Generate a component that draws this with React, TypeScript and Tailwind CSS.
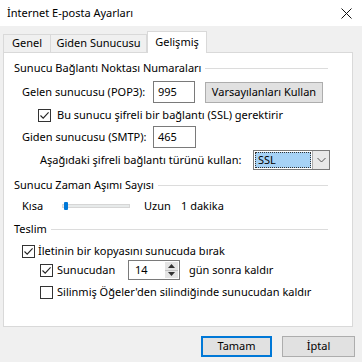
import React from "react"

const font = { fontFamily: '"Noto Sans", "Open Sans", sans-serif' }

function CheckBox({ checked }: { checked?: boolean }) {
  return (
    <span className="flex h-[13px] w-[13px] shrink-0 items-center justify-center border border-[#333333] bg-white">
      {checked && (
        <svg width="11" height="11" viewBox="0 0 11 11">
          <path d="M1.5 5.5 L4.2 8.2 L9.6 2.4" fill="none" stroke="#222" strokeWidth="1.1" />
        </svg>
      )}
    </span>
  )
}

function GroupHeader({ label }: { label: string }) {
  return (
    <div className="mt-[7px] flex h-[16px] items-center pl-[10px] pr-[24px]">
      <span>{label}</span>
      <span className="ml-[4px] h-px flex-1 bg-[#dcdcdc]" />
    </div>
  )
}

export default function App() {
  return (
    <div style={font} className="relative h-[362px] w-[362px] overflow-hidden whitespace-nowrap bg-[#f0f0f0] text-[11px] text-black">
      <div className="flex h-[26px] items-center justify-between bg-white pl-[7px] pr-[10px]">
        <span className="text-[11px]">İnternet E-posta Ayarları</span>
        <svg width="11" height="11" viewBox="0 0 11 11">
          <path d="M0.5 0.5 L10.5 10.5 M10.5 0.5 L0.5 10.5" stroke="#111" strokeWidth="1" />
        </svg>
      </div>

      <div className="flex h-[26px] items-end pl-[3px]">
        <div className="flex h-[18px] w-[48px] items-center justify-center border border-b-0 border-[#d9d9d9] bg-[#f0f0f0]">
          Genel
        </div>
        <div className="flex h-[18px] w-[96px] items-center justify-center border border-b-0 border-l-0 border-[#d9d9d9] bg-[#f0f0f0]">
          Giden Sunucusu
        </div>
        <div className="relative z-10 -mb-px flex h-[22px] w-[60px] items-center justify-center border border-b-0 border-[#d9d9d9] bg-white">
          Gelişmiş
        </div>
      </div>

      <div className="ml-[3px] h-[275px] w-[350px] border border-[#d9d9d9] bg-white">
        <GroupHeader label="Sunucu Bağlantı Noktası Numaraları" />

        <div className="mt-[5px] flex h-[22px] items-center pl-[18px]">
          <span className="w-[131px]">Gelen sunucusu (POP3):</span>
          <div className="flex h-[22px] w-[42px] items-center border border-[#7a7a7a] pl-[4px]">995</div>
          <button className="ml-[10px] h-[21px] w-[118px] border border-[#adadad] bg-[#e1e1e1]">
            Varsayılanları Kullan
          </button>
        </div>

        <div className="mt-[4px] flex h-[16px] items-center gap-[6px] pl-[34px]">
          <CheckBox checked />
          <span>Bu sunucu şifreli bir bağlantı (SSL) gerektirir</span>
        </div>

        <div className="mt-[3px] flex h-[22px] items-center pl-[18px]">
          <span className="w-[131px]">Giden sunucusu (SMTP):</span>
          <div className="flex h-[22px] w-[43px] items-center border border-[#7a7a7a] pl-[4px]">465</div>
        </div>

        <div className="mt-[2px] flex h-[20px] items-center pl-[36px]">
          <span className="w-[213px]">Aşağıdaki şifreli bağlantı türünü kullan:</span>
          <div className="flex h-[20px] w-[77px] border border-[#7a7a7a] bg-white">
            <div className="m-[1px] flex flex-1 items-center border border-dotted border-[#333] bg-[#a6d2f6] pl-[2px]">
              SSL
            </div>
            <div className="flex w-[17px] items-center justify-center border-l border-[#acacac] bg-[#e8e8e8]">
              <svg width="9" height="6" viewBox="0 0 9 6">
                <path d="M0.5 1 L4.5 5 L8.5 1" fill="none" stroke="#555" strokeWidth="1" />
              </svg>
            </div>
          </div>
        </div>

        <GroupHeader label="Sunucu Zaman Aşımı Sayısı" />

        <div className="mt-[5px] flex h-[16px] items-center pl-[18px]">
          <span className="w-[40px]">Kısa</span>
          <div className="relative flex h-[16px] w-[68px] items-center">
            <div className="h-[4px] w-full border border-[#d6d6d6] bg-[#e7eaea]" />
            <div className="absolute left-[2px] top-[4px] h-[8px] w-[4px] rounded-[1px] bg-[#0078d7]" />
          </div>
          <span className="ml-[14px] w-[37px]">Uzun</span>
          <span>1 dakika</span>
        </div>

        <GroupHeader label="Teslim" />

        <div className="mt-[6px] flex h-[16px] items-center gap-[3px] pl-[18px]">
          <CheckBox checked />
          <span>İletinin bir kopyasını sunucuda bırak</span>
        </div>

        <div className="mt-[1px] flex h-[20px] items-center pl-[36px]">
          <CheckBox checked />
          <span className="ml-[4px] w-[71px]">Sunucudan</span>
          <div className="flex h-[20px] w-[52px] border border-[#7a7a7a]">
            <span className="flex flex-1 items-center pl-[6px]">14</span>
            <div className="m-[1px] flex w-[13px] flex-col bg-[#e5e5e5]">
              <div className="flex flex-1 items-center justify-center border-b border-[#c4c4c4]">
                <svg width="7" height="4" viewBox="0 0 7 4"><path d="M0 4 L3.5 0 L7 4 Z" fill="#333" /></svg>
              </div>
              <div className="flex flex-1 items-center justify-center">
                <svg width="7" height="4" viewBox="0 0 7 4"><path d="M0 0 L3.5 4 L7 0 Z" fill="#333" /></svg>
              </div>
            </div>
          </div>
          <span className="ml-[9px]">gün sonra kaldır</span>
        </div>

        <div className="mt-[4px] flex h-[16px] items-center gap-[4px] pl-[36px]">
          <CheckBox />
          <span>Silinmiş Öğeler'den silindiğinde sunucudan kaldır</span>
        </div>
      </div>

      <div className="mt-[9px] flex justify-end gap-[10px] pr-[7px]">
        <button className="h-[21px] w-[71px] border-2 border-[#0078d7] bg-[#e1e1e1]">Tamam</button>
        <button className="h-[21px] w-[73px] border border-[#adadad] bg-[#e1e1e1]">İptal</button>
      </div>
    </div>
  )
}
